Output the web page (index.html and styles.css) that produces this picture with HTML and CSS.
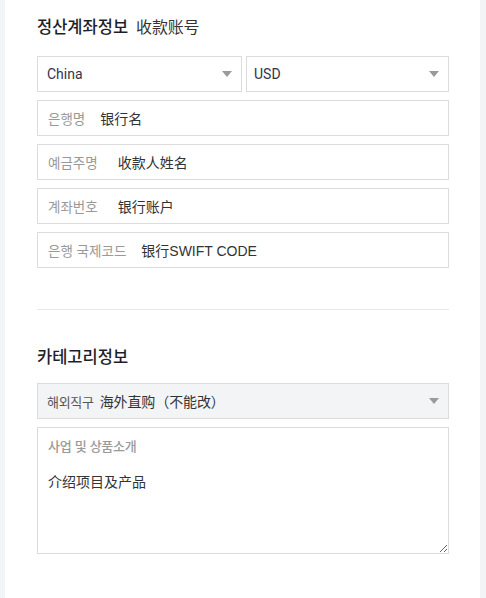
FILE: index.html
```html
<!DOCTYPE html>
<html lang="zh-CN">
<head>
<meta charset="utf-8">
<title>정산계좌정보</title>
<link rel="stylesheet" href="styles.css">
</head>
<body>
<main class="card">
  <h2 class="section-title"><span class="title-ko" lang="ko">정산계좌정보</span><span class="title-zh">收款账号</span></h2>

  <div class="select-row">
    <div class="select"><span class="select-text">China</span><span class="caret"></span></div>
    <div class="select select-right"><span class="select-text">USD</span><span class="caret"></span></div>
  </div>

  <div class="field"><span class="label" lang="ko">은행명</span><span class="value">银行名</span></div>
  <div class="field"><span class="label" lang="ko">예금주명</span><span class="value value-wide">收款人姓名</span></div>
  <div class="field"><span class="label" lang="ko">계좌번호</span><span class="value value-wide">银行账户</span></div>
  <div class="field"><span class="label" lang="ko">은행 국제코드</span><span class="value">银行SWIFT CODE</span></div>

  <hr class="divider">

  <h2 class="section-title section-title-2"><span class="title-ko" lang="ko">카테고리정보</span></h2>

  <div class="select select-disabled"><span class="select-label" lang="ko">해외직구</span><span class="select-value">海外直购（不能改）</span><span class="caret"></span></div>

  <div class="textbox">
    <div class="textbox-label" lang="ko">사업 및 상품소개</div>
    <textarea class="textbox-area">介绍项目及产品</textarea>
  </div>
</main>
</body>
</html>
```

FILE: styles.css
```css
html, body {
  margin: 0;
  padding: 0;
}
body {
  background: #f3f4f6;
  font-family: "Liberation Sans", "Noto Sans CJK SC", sans-serif;
  color: #333;
}
.card {
  box-sizing: border-box;
  min-height: 100vh;
  margin: 0 6px 0 5px;
  padding: 14px 31px 40px 32px;
  background: #fff;
}
.section-title {
  margin: 0 0 18px;
  font-size: 16px;
  line-height: 24px;
  font-weight: normal;
  display: flex;
  align-items: baseline;
  gap: 8px;
}
.title-ko {
  font-family: "Noto Sans CJK KR", sans-serif;
  font-size: 16.5px;
  font-weight: 500;
  color: #1e1e28;
}
.title-zh {
  font-family: "Noto Sans CJK SC", sans-serif;
  color: #333;
  letter-spacing: -0.2px;
}
.select-row {
  display: flex;
  gap: 4px;
  margin-bottom: 8px;
}
.select {
  flex: 1;
  box-sizing: border-box;
  height: 36px;
  border: 1px solid #dcdcdc;
  display: flex;
  align-items: center;
  padding: 0 9px 0 9px;
  background: #fff;
}
.select-right {
  padding-left: 7px;
}
.select-text {
  flex: 1;
  font-family: Roboto, "Liberation Sans", sans-serif;
  font-size: 14px;
  color: #33334a;
}
.caret {
  width: 0;
  height: 0;
  border-left: 5px solid transparent;
  border-right: 5px solid transparent;
  border-top: 6px solid #9a9a9a;
}
.field {
  box-sizing: border-box;
  height: 36px;
  border: 1px solid #dcdcdc;
  display: flex;
  align-items: center;
  padding: 0 10px;
  margin-bottom: 8px;
  gap: 15px;
}
.label {
  font-family: "Noto Sans CJK KR", sans-serif;
  font-size: 13.5px;
  color: #999;
}
.value {
  font-size: 14px;
  color: #333;
}
.value-wide {
  margin-left: 5px;
}
.divider {
  border: 0;
  border-top: 1px solid #e8e8e8;
  margin: 41px 0 34px;
}
.section-title-2 {
  margin-bottom: 15px;
}
.select-disabled {
  background: #f3f4f6;
  margin-bottom: 8px;
  padding-left: 9px;
}
.select-label {
  font-family: "Noto Sans CJK KR", sans-serif;
  font-size: 13px;
  color: #555;
  letter-spacing: -0.3px;
  margin-right: 6px;
}
.select-value {
  flex: 1;
  font-size: 14px;
  color: #333;
  letter-spacing: -0.1px;
}
.textbox {
  box-sizing: border-box;
  height: 127px;
  border: 1px solid #dcdcdc;
  display: flex;
  flex-direction: column;
  padding: 9px 0 0 10px;
}
.textbox-label {
  font-family: "Noto Sans CJK KR", sans-serif;
  font-size: 13px;
  line-height: 18px;
  font-weight: 500;
  color: #9a9a9a;
  letter-spacing: -0.3px;
}
.textbox-area {
  flex: 1;
  margin-top: 17px;
  padding: 0;
  border: 0;
  outline: none;
  resize: vertical;
  font-family: "Liberation Sans", "Noto Sans CJK SC", sans-serif;
  font-size: 14px;
  line-height: 20px;
  color: #333;
  background: transparent;
}
```
